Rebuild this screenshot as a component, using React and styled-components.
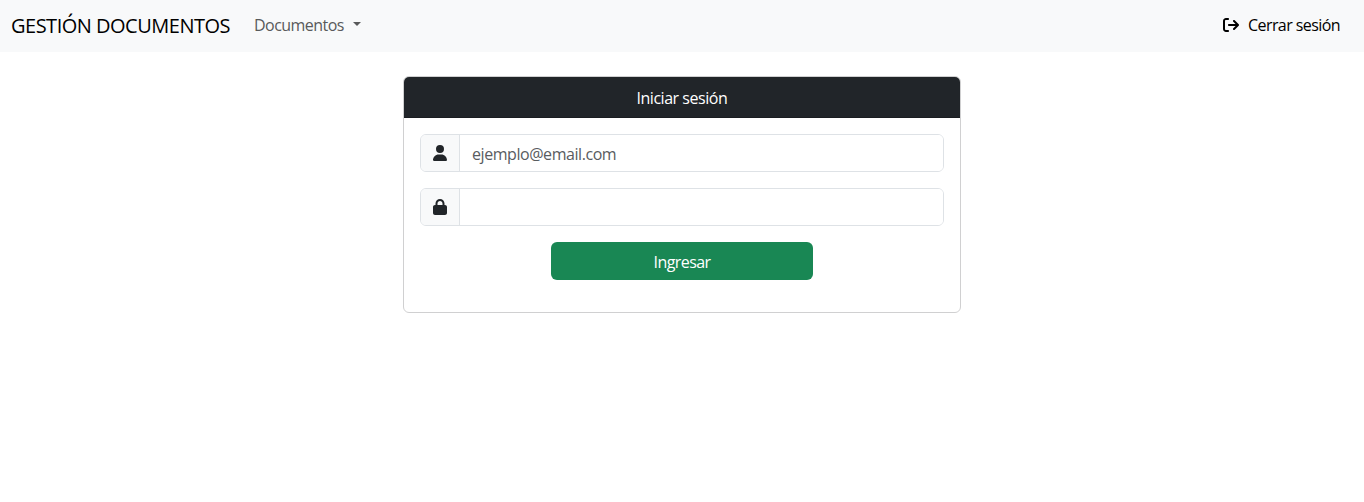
import React from "react";
import styled, { createGlobalStyle } from "styled-components";
import { FaUser, FaLock, FaArrowRightFromBracket } from "react-icons/fa6";

const GlobalStyle = createGlobalStyle`
  *, *::before, *::after { box-sizing: border-box; }
  body {
    margin: 0;
    background: #fff;
    color: #212529;
    font: 400 16px/24px "Segoe UI", "Open Sans", "Noto Sans", sans-serif;
  }
`;

const Label = styled.span`
  display: inline-block;
  white-space: nowrap;
  width: ${(p) => p.$width}px;
  letter-spacing: ${(p) => p.$spacing || 0}px;
`;

const Navbar = styled.nav`
  display: flex;
  align-items: center;
  height: 52px;
  padding: 0 24px 0 11px;
  background: #f8f9fa;
`;

const Brand = styled.a`
  margin-right: 24px;
  color: #000;
  font-size: 20px;
  line-height: 30px;
`;

const NavLink = styled.a`
  display: flex;
  align-items: center;
  padding-bottom: 2px;
  color: ${(p) => (p.$strong ? "#000" : "#595a5b")};
  margin-left: ${(p) => (p.$end ? "auto" : "0")};
`;

const Caret = styled.span`
  margin: -2px 0 0 9px;
  border-top: 4.8px solid currentColor;
  border-left: 4.8px solid transparent;
  border-right: 4.8px solid transparent;
`;

const LogoutIcon = styled(FaArrowRightFromBracket)`
  margin-right: 9px;
`;

const Card = styled.form`
  width: 558px;
  height: 237px;
  margin: 24px auto 0;
  border: 1px solid #d0d0d1;
  border-radius: 6px;
  overflow: hidden;
`;

const CardHeader = styled.header`
  display: flex;
  justify-content: center;
  height: 41px;
  padding-top: 9px;
  border-bottom: 1px solid #1a1d21;
  background: #212529;
  color: #fff;
`;

const CardBody = styled.div`
  display: flex;
  flex-direction: column;
  gap: 16px;
  padding: 16px;
`;

const InputGroup = styled.div`
  display: flex;
  height: 38px;
  border: 1px solid #dee2e6;
  border-radius: 6px;
  overflow: hidden;
`;

const Addon = styled.span`
  display: flex;
  align-items: center;
  justify-content: center;
  width: 39px;
  border-right: 1px solid #dee2e6;
  background: #f8f9fa;
`;

const Input = styled.input`
  flex: 1;
  min-width: 0;
  padding: 2px 12px 0;
  border: 0;
  outline: 0;
  background: #fff;
  font: inherit;
  letter-spacing: -0.44px;
  &::placeholder { color: #595c5f; opacity: 1; }
`;

const SubmitButton = styled.button`
  display: flex;
  align-items: center;
  justify-content: center;
  align-self: center;
  width: 262px;
  height: 38px;
  padding: 2px 0 0;
  border: 0;
  border-radius: 6px;
  background: #198754;
  color: #fff;
  font: inherit;
  text-align: left;
`;

export default function App() {
  return (
    <>
      <GlobalStyle />
      <Navbar>
        <Brand><Label $width={219} $spacing={-0.5}>GESTIÓN DOCUMENTOS</Label></Brand>
        <NavLink>
          <Label $width={90} $spacing={-0.54}>Documentos</Label>
          <Caret />
        </NavLink>
        <NavLink $strong $end>
          <LogoutIcon />
          <Label $width={92} $spacing={-0.57}>Cerrar sesión</Label>
        </NavLink>
      </Navbar>
      <Card onSubmit={(e) => e.preventDefault()}>
        <CardHeader><Label $width={91} $spacing={-0.47}>Iniciar sesión</Label></CardHeader>
        <CardBody>
          <InputGroup>
            <Addon><FaUser /></Addon>
            <Input type="email" placeholder="ejemplo@email.com" />
          </InputGroup>
          <InputGroup>
            <Addon><FaLock /></Addon>
            <Input type="password" />
          </InputGroup>
          <SubmitButton><Label $width={57} $spacing={-0.56}>Ingresar</Label></SubmitButton>
        </CardBody>
      </Card>
    </>
  );
}
